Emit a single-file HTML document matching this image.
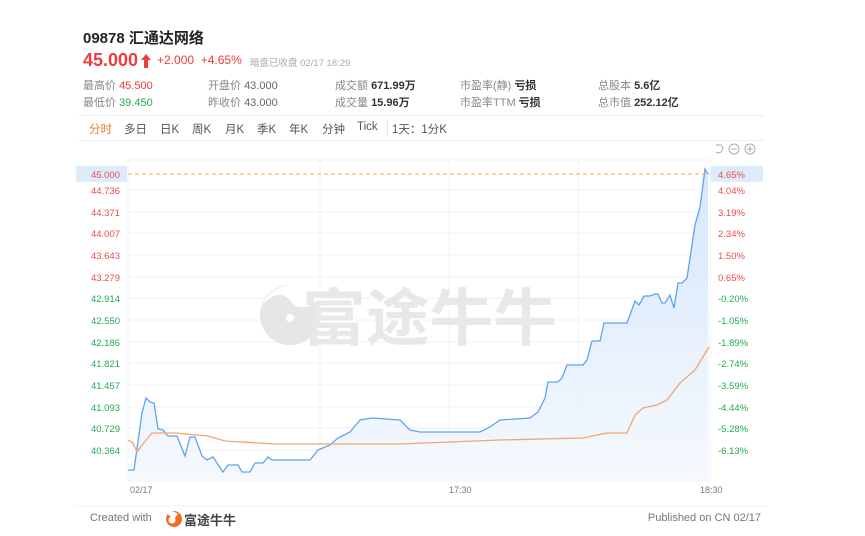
<!DOCTYPE html>
<html><head><meta charset="utf-8"><style>
body{margin:0;width:865px;height:536px;background:#fff;font-family:"Liberation Sans","Noto Sans CJK SC",sans-serif;position:relative;overflow:hidden}
.a{position:absolute;white-space:nowrap}
.l{color:#888;font-size:11px}
.v{color:#333;font-size:11px;font-weight:bold}
.tab{position:absolute;top:121px;font-size:11.5px;color:#555}
</style></head><body>
<div class="a" style="left:83px;top:27px;font-size:15px;font-weight:bold;color:#222">09878 汇通达网络</div>
<div class="a" style="left:83px;top:50px;font-size:18px;font-weight:bold;color:#ef3b3b">45.000</div>
<svg class="a" style="left:140px;top:53px" width="12" height="16"><path d="M6 1 L11 7 L8 7 L8 15 L4 15 L4 7 L1 7 Z" fill="#ef3b3b"/></svg>
<div class="a" style="left:157px;top:53px;font-size:12px;color:#ef3b3b">+2.000 &nbsp;+4.65%</div>
<div class="a" style="left:250px;top:55px;font-size:9.5px;color:#aaa">暗盘已收盘 02/17 18:29</div>

<div class="a" style="left:83px;top:76px"><span class="l">最高价 </span><span style="font-size:11px;color:#ef3b3b">45.500</span></div>
<div class="a" style="left:83px;top:93px"><span class="l">最低价 </span><span style="font-size:11px;color:#1fae4e">39.450</span></div>
<div class="a" style="left:208px;top:76px"><span class="l">开盘价 </span><span style="font-size:11px;color:#666">43.000</span></div>
<div class="a" style="left:208px;top:93px"><span class="l">昨收价 </span><span style="font-size:11px;color:#666">43.000</span></div>
<div class="a" style="left:335px;top:76px"><span class="l">成交额 </span><span class="v">671.99万</span></div>
<div class="a" style="left:335px;top:93px"><span class="l">成交量 </span><span class="v">15.96万</span></div>
<div class="a" style="left:460px;top:76px"><span class="l">市盈率(静) </span><span class="v">亏损</span></div>
<div class="a" style="left:460px;top:93px"><span class="l">市盈率TTM </span><span class="v">亏损</span></div>
<div class="a" style="left:598px;top:76px"><span class="l">总股本 </span><span class="v">5.6亿</span></div>
<div class="a" style="left:598px;top:93px"><span class="l">总市值 </span><span class="v">252.12亿</span></div>

<div class="a" style="left:78px;top:115px;width:686px;height:1px;background:#edf0f5"></div>
<div class="a" style="left:78px;top:140px;width:686px;height:1px;background:#edf0f5"></div>
<div class="tab" style="left:89px;color:#f07a2a">分时</div>
<div class="tab" style="left:124px">多日</div>
<div class="tab" style="left:160px">日K</div>
<div class="tab" style="left:192px">周K</div>
<div class="tab" style="left:225px">月K</div>
<div class="tab" style="left:257px">季K</div>
<div class="tab" style="left:289px">年K</div>
<div class="tab" style="left:322px">分钟</div>
<div class="tab" style="left:357px">Tick</div>
<div class="a" style="left:387px;top:119px;width:1px;height:18px;background:#e5e5e5"></div>
<div class="tab" style="left:392px">1天：1分K</div>

<svg class="a" style="left:0;top:0" width="865" height="536">
<defs><linearGradient id="g" x1="0" y1="0" x2="0" y2="1"><stop offset="0" stop-color="#cfe2fb"/><stop offset="1" stop-color="#f4f8fe"/></linearGradient></defs>
<g stroke="#eef2f8" stroke-width="1">
<line x1="128" y1="160" x2="710" y2="160"/>
<line x1="128" y1="190" x2="710" y2="190"/><line x1="128" y1="212" x2="710" y2="212"/><line x1="128" y1="233" x2="710" y2="233"/><line x1="128" y1="255" x2="710" y2="255"/><line x1="128" y1="277" x2="710" y2="277"/><line x1="128" y1="298" x2="710" y2="298"/><line x1="128" y1="320" x2="710" y2="320"/><line x1="128" y1="342" x2="710" y2="342"/><line x1="128" y1="363" x2="710" y2="363"/><line x1="128" y1="385" x2="710" y2="385"/><line x1="128" y1="407" x2="710" y2="407"/><line x1="128" y1="428" x2="710" y2="428"/><line x1="128" y1="450" x2="710" y2="450"/><line x1="128" y1="472" x2="710" y2="472"/><line x1="128" y1="481" x2="710" y2="481"/>
<line x1="128" y1="160" x2="128" y2="481"/><line x1="320" y1="160" x2="320" y2="481"/><line x1="449" y1="160" x2="449" y2="481"/><line x1="578" y1="160" x2="578" y2="481"/><line x1="710" y1="160" x2="710" y2="481"/>
</g>
<g fill="#e6e6e6" font-family="Liberation Sans,Noto Sans CJK SC,sans-serif">
<circle cx="290" cy="315" r="30"/>
<path d="M262,305 Q278,288 290,300 Q295,310 310,306 L318,300 Q312,280 290,285 Q270,288 262,305 Z" fill="#fff"/>
<circle cx="290" cy="318" r="4" fill="#fff"/>
<text x="302" y="340" font-size="62" font-weight="bold" fill="#e8e8e8" textLength="255" lengthAdjust="spacingAndGlyphs">富途牛牛</text>
</g>
<path d="M128,470 L134,470 L142,413 L146,398 L150,402 L154,403 L158,429 L163,430 L168,436 L177,436 L185,456 L190,437 L195,437 L202,456 L207,460 L213,457 L223,472 L228,465 L238,465 L242,472 L250,472 L255,463 L263,463 L268,457 L272,460 L310,460 L318,450 L330,445 L338,438 L350,432 L360,420 L372,418 L400,420 L410,430 L420,432 L480,432 L490,427 L500,420 L530,418 L538,412 L545,398 L548,382 L558,382 L562,378 L567,365 L583,365 L587,360 L592,341 L600,341 L604,323 L627,323 L635,301 L639,305 L644,296 L650,296 L655,294 L658,294 L662,303 L665,303 L670,295 L674,308 L678,283 L682,283 L687,278 L695,225 L700,207 L705,169 L708,174 L708,481 L128,481 Z" fill="url(#g)" opacity="0.85"/>
<path d="M128,470 L134,470 L142,413 L146,398 L150,402 L154,403 L158,429 L163,430 L168,436 L177,436 L185,456 L190,437 L195,437 L202,456 L207,460 L213,457 L223,472 L228,465 L238,465 L242,472 L250,472 L255,463 L263,463 L268,457 L272,460 L310,460 L318,450 L330,445 L338,438 L350,432 L360,420 L372,418 L400,420 L410,430 L420,432 L480,432 L490,427 L500,420 L530,418 L538,412 L545,398 L548,382 L558,382 L562,378 L567,365 L583,365 L587,360 L592,341 L600,341 L604,323 L627,323 L635,301 L639,305 L644,296 L650,296 L655,294 L658,294 L662,303 L665,303 L670,295 L674,308 L678,283 L682,283 L687,278 L695,225 L700,207 L705,169 L708,174" fill="none" stroke="#5ea2f5" stroke-width="1.3"/>
<path d="M128,440 L133,443 L137,452 L142,445 L152,433 L175,433 L208,436 L225,441 L275,444 L400,444 L500,440 L583,438 L607,433 L627,433 L635,415 L643,408 L657,405 L667,400 L680,383 L695,370 L709,347" fill="none" stroke="#f5a46a" stroke-width="1.3"/>
<line x1="128" y1="174" x2="710" y2="174" stroke="#f5a04a" stroke-dasharray="4,3" stroke-width="1"/>
<rect x="76" y="166" width="51" height="16" fill="#ddecfb"/>
<rect x="711" y="166" width="52" height="16" fill="#ddecfb"/>
<g font-size="9.5" font-family="Liberation Sans,sans-serif" text-anchor="end">
<text x="120" y="178" fill="#ef4b4b">45.000</text>
<g fill="#ef4b4b"><text x="120" y="194">44.736</text><text x="120" y="216">44.371</text><text x="120" y="237">44.007</text><text x="120" y="259">43.643</text><text x="120" y="281">43.279</text></g>
<g fill="#22ab52"><text x="120" y="302">42.914</text><text x="120" y="324">42.550</text><text x="120" y="346">42.186</text><text x="120" y="367">41.821</text><text x="120" y="389">41.457</text><text x="120" y="411">41.093</text><text x="120" y="432">40.729</text><text x="120" y="454">40.364</text></g>
</g>
<g font-size="9.5" font-family="Liberation Sans,sans-serif">
<text x="718" y="178" fill="#ef4b4b">4.65%</text>
<g fill="#ef4b4b"><text x="718" y="194">4.04%</text><text x="718" y="216">3.19%</text><text x="718" y="237">2.34%</text><text x="718" y="259">1.50%</text><text x="718" y="281">0.65%</text></g>
<g fill="#22ab52"><text x="718" y="302">-0.20%</text><text x="718" y="324">-1.05%</text><text x="718" y="346">-1.89%</text><text x="718" y="367">-2.74%</text><text x="718" y="389">-3.59%</text><text x="718" y="411">-4.44%</text><text x="718" y="432">-5.28%</text><text x="718" y="454">-6.13%</text></g>
<g fill="#777" font-size="9"><text x="130" y="493">02/17</text><text x="449" y="493">17:30</text><text x="700" y="493">18:30</text></g>
</g>
<g fill="none" stroke="#aaa" stroke-width="1">
<path d="M716,145 L721,145 A4,4 0 1 1 716,152"/>
<circle cx="734" cy="149" r="5"/><line x1="731" y1="149" x2="737" y2="149"/>
<circle cx="750" cy="149" r="5"/><line x1="747" y1="149" x2="753" y2="149"/><line x1="750" y1="146" x2="750" y2="152"/>
</g>
<line x1="75" y1="506" x2="768" y2="506" stroke="#eef0f4"/>
<circle cx="174" cy="519" r="8" fill="#f36d21"/>
<circle cx="172" cy="520" r="3.5" fill="#fff"/>
<path d="M166,513 Q172,509 178,514 L174,519 Z" fill="#fff"/>
</svg>
<div class="a" style="left:90px;top:512px;font-size:11px;color:#777">Created with</div>
<div class="a" style="left:184px;top:510px;font-size:13px;color:#444;font-weight:bold">富途牛牛</div>
<div class="a" style="right:104px;top:512px;font-size:11px;color:#777">Published on CN 02/17</div>
</body></html>
